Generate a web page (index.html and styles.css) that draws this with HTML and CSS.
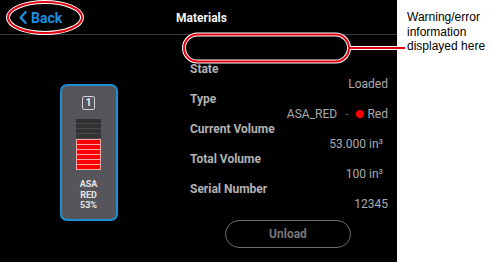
FILE: index.html
```html
<!DOCTYPE html>
<html>
<head>
<meta charset="utf-8">
<link rel="stylesheet" href="styles.css">
</head>
<body>
<div class="page">
  <div class="screen">
    <div class="header">
      <div class="back">
        <svg class="chev" width="8" height="13" viewBox="0 0 8 13"><path d="M6.5 1.2 L1.6 6.5 L6.5 11.8" fill="none" stroke="#1a8fe0" stroke-width="2.4" stroke-linecap="round" stroke-linejoin="round"/></svg>
        <span>Back</span>
      </div>
      <div class="title">Materials</div>
      <div></div>
    </div>
    <div class="body">
      <div class="left">
        <div class="card">
          <div class="badge">1</div>
          <div class="bars">
            <div class="seg-dark"></div>
            <div class="seg-dark"></div>
            <div class="seg-dark"></div>
            <div class="seg-dark"></div>
            <div class="red-block">
              <div class="seg-red"></div>
              <div class="seg-red"></div>
              <div class="seg-red"></div>
              <div class="seg-red"></div>
              <div class="seg-red"></div>
              <div class="seg-red"></div>
            </div>
          </div>
          <div class="card-text">ASA<br>RED<br>53%</div>
        </div>
      </div>
      <div class="right">
        <div class="label">State</div>
        <div class="value">Loaded</div>
        <div class="label">Type</div>
        <div class="value type-row"><span>ASA_RED</span><span class="dash">-</span><span class="dot"></span><span>Red</span></div>
        <div class="label">Current Volume</div>
        <div class="value unit">53.000 in³</div>
        <div class="label">Total Volume</div>
        <div class="value unit">100 in³</div>
        <div class="label">Serial Number</div>
        <div class="value">12345</div>
        <button class="unload">Unload</button>
      </div>
    </div>
  </div>
  <div class="note">Warning/error<br>information<br>displayed here</div>
  <svg class="overlay" width="493" height="262" viewBox="0 0 493 262">
    <ellipse cx="45" cy="17.5" rx="37" ry="15.5" fill="none" stroke="#fff" stroke-width="4"/>
    <ellipse cx="45" cy="17.5" rx="37" ry="15.5" fill="none" stroke="#e0000f" stroke-width="2"/>
    <rect x="184" y="34.5" width="165" height="27" rx="13.5" fill="none" stroke="#fff" stroke-width="4"/>
    <line x1="350" y1="48" x2="397" y2="48" stroke="#fff" stroke-width="4"/>
    <rect x="184" y="34.5" width="165" height="27" rx="13.5" fill="none" stroke="#e0000f" stroke-width="2"/>
    <line x1="349" y1="48" x2="405" y2="48" stroke="#e0000f" stroke-width="2"/>
  </svg>
</div>
</body>
</html>
```

FILE: styles.css
```css
html, body {
  margin: 0;
  padding: 0;
  background: #fff;
}
.page {
  position: relative;
  display: flex;
  width: 493px;
  height: 262px;
  overflow: hidden;
  font-family: Roboto, "Liberation Sans", sans-serif;
}
.screen {
  width: 397px;
  height: 262px;
  background: #000;
  display: flex;
  flex-direction: column;
}
.header {
  height: 35px;
  border-bottom: 1px solid #3a3a3a;
  display: grid;
  grid-template-columns: 1fr auto 1fr;
  align-items: center;
  padding-top: 1px;
  box-sizing: border-box;
}
.back {
  display: flex;
  align-items: center;
  gap: 4px;
  padding-left: 19px;
  color: #1a8fe0;
  font-weight: 700;
  font-size: 14px;
}
.chev {
  display: block;
}
.title {
  color: #f2f2f2;
  font-weight: 700;
  font-size: 12px;
  padding-left: 6px;
}
.body {
  flex: 1;
  display: grid;
  grid-template-columns: 176px 1fr;
}
.left {
  display: flex;
  justify-content: center;
  align-items: flex-start;
  padding-top: 49px;
  padding-left: 1px;
}
.card {
  width: 58px;
  height: 137px;
  box-sizing: border-box;
  border: 2px solid #1b8fd2;
  border-radius: 7px;
  background: #55555b;
  display: flex;
  flex-direction: column;
  align-items: center;
  padding-top: 10px;
}
.badge {
  width: 13px;
  height: 14px;
  box-sizing: border-box;
  border: 1px solid #d0d0d0;
  border-radius: 2px;
  color: #f0f0f0;
  font-weight: 700;
  font-size: 10px;
  line-height: 12px;
  text-align: center;
}
.bars {
  margin-top: 9px;
  width: 25px;
  display: flex;
  flex-direction: column;
}
.seg-dark {
  height: 4px;
  background: #323232;
  border-bottom: 1px solid #4a4a4a;
}
.red-block {
  border: 1px solid #f0a8a8;
  display: flex;
  flex-direction: column;
  gap: 1px;
  background: #f0a8a8;
}
.seg-red {
  height: 4px;
  background: #ff0000;
}
.card-text {
  margin-top: 9px;
  color: #e4e4e4;
  font-weight: 700;
  font-size: 9px;
  line-height: 10.5px;
  text-align: center;
}
.right {
  padding: 26.5px 9px 0 14px;
  display: flex;
  flex-direction: column;
}
.label {
  color: #b2b2b2;
  font-weight: 700;
  font-size: 12px;
  line-height: 15px;
}
.value {
  color: #acacac;
  font-size: 12px;
  line-height: 15px;
  text-align: right;
}
.unit {
  padding-right: 5px;
}
.type-row {
  display: flex;
  justify-content: flex-end;
  align-items: center;
}
.dash {
  color: #5a5a5a;
  margin: 0 8px 0 8px;
}
.dot {
  width: 8px;
  height: 8px;
  border-radius: 50%;
  background: #ff0000;
  margin-right: 3px;
}
.unload {
  margin: 8.5px auto 0 auto;
  width: 126px;
  height: 28px;
  border: 1px solid #6e6e6e;
  border-radius: 14px;
  background: transparent;
  color: #777;
  font-family: Roboto, "Liberation Sans", sans-serif;
  font-weight: 700;
  font-size: 12px;
  position: relative;
  left: -1px;
}
.note {
  flex: 1;
  padding: 10px 0 0 10px;
  font-family: "Liberation Sans", Arial, sans-serif;
  font-size: 12px;
  line-height: 14.5px;
  color: #000;
}
.overlay {
  position: absolute;
  left: 0;
  top: 0;
  pointer-events: none;
}
```
